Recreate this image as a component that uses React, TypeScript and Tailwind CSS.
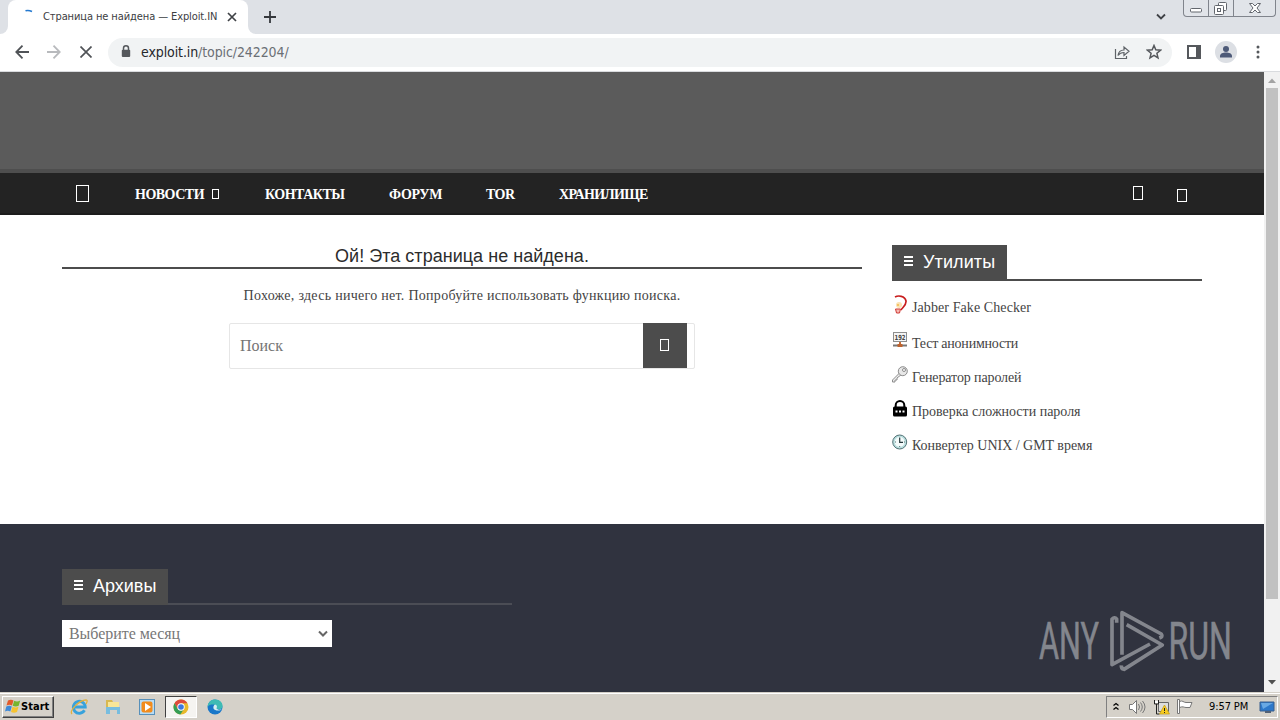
import type { ReactNode } from "react";

interface NavItem {
  label: string;
  className: string;
  textWidth: string;
  dropdown?: boolean;
}

interface Utility {
  label: string;
  icon: ReactNode;
  className: string;
}

const navItems: NavItem[] = [
  { label: "НОВОСТИ", className: "ml-[46px] w-[84px]", textWidth: "tracking-[-0.5px]", dropdown: true },
  { label: "КОНТАКТЫ", className: "ml-[46px] w-[79px]", textWidth: "tracking-[-0.5px]" },
  { label: "ФОРУМ", className: "ml-[45px] w-[53px]", textWidth: "tracking-[-0.32px]" },
  { label: "TOR", className: "ml-[44px] w-[29px]", textWidth: "tracking-[-0.5px]" },
  { label: "ХРАНИЛИЩЕ", className: "ml-[44px] w-[90px]", textWidth: "tracking-[-0.68px]" },
];

function JabberIcon() {
  return (
    <svg width="16" height="20" viewBox="0 0 16 20" fill="none">
      <path d="M3 2C6 .3 13 .5 14 6c.5 4-3 6-5 9" stroke="#c81e1e" strokeWidth="1.700" />
      <circle cx="7" cy="10" r="3" fill="#fbe3b4" />
      <circle cx="6" cy="10" r="1" fill="#f2b84b" />
      <path d="M3.500 14h5l-1 4h-3z" fill="#f6b8b2" stroke="#cf3a35" />
    </svg>
  );
}

function IpIcon() {
  return (
    <svg width="16" height="16" viewBox="0 0 16 16">
      <rect x="1.500" y=".5" width="13" height="9" fill="#f5f5f5" stroke="#8e8e8e" />
      <text x="2.500" y="7.500" fontSize="7" fontWeight="bold" fontFamily="DejaVu Sans" textLength="11" lengthAdjust="spacingAndGlyphs" fill="#444">192</text>
      <path d="M7 10h2v3H7z" fill="#c66a35" />
      <path d="M1 13.500h14" stroke="#777" strokeWidth="2" />
      <path d="M5.500 13.500h5" stroke="#bd632e" strokeWidth="3" />
    </svg>
  );
}

function KeyIcon() {
  return (
    <svg width="16" height="17" viewBox="0 0 16 17" fill="none">
      <path d="M7.500 7 .5 14v2h2.500v-2h2v-2l4.500-3.500" fill="#eee" stroke="#8c8c8c" />
      <circle cx="10.800" cy="5.200" r="4.500" fill="#e7e7e7" stroke="#8c8c8c" />
      <circle cx="12" cy="4" r="1.500" fill="#fff" stroke="#8c8c8c" />
    </svg>
  );
}

function PadlockIcon() {
  return (
    <svg width="16" height="17" viewBox="0 0 16 17" fill="none">
      <path d="M3.700 8V5.300a4.300 4.300 0 0 1 8.600 0V8" stroke="#000" strokeWidth="2" />
      <rect x="1" y="6.500" width="14" height="10" rx="1.500" fill="#000" />
      <path d="M3.500 10.500h2v2h-2zM7 10.500h2v2H7zM10.500 10.500h2v2h-2z" fill="#fff" />
    </svg>
  );
}

function ClockIcon() {
  return (
    <svg width="16" height="16" viewBox="0 0 16 16" fill="none">
      <circle cx="7.700" cy="8" r="7" fill="#b9dede" stroke="#547276" />
      <circle cx="7.700" cy="8" r="5" fill="#f4fbfb" />
      <path d="M7.700 3.500V8.300H11" stroke="#26383b" strokeWidth="1.200" />
      <path d="M7.700 12v1M3 8h1M12 8h1" stroke="#547276" />
    </svg>
  );
}

const utilities: Utility[] = [
  { label: "Jabber Fake Checker", icon: <JabberIcon />, className: "tracking-[0.09px]" },
  { label: "Тест анонимности", icon: <IpIcon />, className: "tracking-[-0.22px]" },
  { label: "Генератор паролей", icon: <KeyIcon />, className: "tracking-[-0.12px]" },
  { label: "Проверка сложности пароля", icon: <PadlockIcon />, className: "tracking-[-0.01px]" },
  { label: "Конвертер UNIX / GMT время", icon: <ClockIcon />, className: "tracking-[-0.02px]" },
];

function TabStrip() {
  return (
    <div className="flex h-[34px] bg-[#dee1e6]">
      <div className="w-2 bg-white">
        <div className="h-full rounded-br-lg bg-[#dee1e6]" />
      </div>
      <div className="flex w-60 items-center rounded-t-lg bg-white">
        <svg className="ml-3 shrink-0" width="16" height="16" viewBox="0 0 16 16" fill="none">
          <path d="M5.500 1.800Q8.500.8 12 2.500" stroke="#2479d0" strokeWidth="1.600" />
        </svg>
        <span className="ml-[7px] w-[176px] text-[11px] tracking-[-0.1px] whitespace-nowrap text-[#3c4043]">
          Страница не найдена — Exploit.IN
        </span>
        <svg className="ml-2" width="10" height="10" viewBox="0 0 10 10">
          <path d="m1 1 8 8M9 1 1 9" stroke="#3f4246" strokeWidth="1.700" />
        </svg>
      </div>
      <div className="w-2 bg-white">
        <div className="h-full rounded-bl-lg bg-[#dee1e6]" />
      </div>
      <svg className="mt-[11px] ml-[8px]" width="12" height="12" viewBox="0 0 12 12">
        <path d="M6 0v12M0 6h12" stroke="#35383c" strokeWidth="1.800" />
      </svg>
      <div className="flex-1" />
      <svg className="mt-[13px]" width="10" height="8" viewBox="0 0 10 8" fill="none">
        <path d="m1 1.500 4 4 4-4" stroke="#3f4246" strokeWidth="1.800" />
      </svg>
      <div className="ml-[17px] flex h-[17px] w-[93px] rounded-b-[4px] border border-t-0 border-[#80848c] bg-[#e1e4e9]">
        <svg width="91" height="16" viewBox="0 0 91 16" fill="none" stroke="#62666d">
          <path d="M24.500 0v16M49.500 0v16" stroke="#80848c" />
          <rect x="6.500" y="8.500" width="11" height="3.500" rx="1" fill="#fff" />
          <rect x="34.500" y="2.500" width="8" height="8" rx="1" fill="#fff" />
          <rect x="30.500" y="5.500" width="9" height="9" rx="1" fill="#fff" />
          <rect x="33.500" y="8.500" width="3" height="3" />
          <path d="M65.500 3.500h3l2.500 2.500 2.500-2.500h3L73 8l3.500 4.500h-3L71 10l-2.500 2.500h-3L69 8z" fill="#fff" />
        </svg>
      </div>
      <div className="w-[4px]" />
    </div>
  );
}

function Toolbar() {
  return (
    <div className="flex h-[38px] items-center border-b border-[#d9dbde] bg-white pb-px">
      <svg className="ml-[15px]" width="14" height="14" viewBox="0 0 14 14" fill="none" stroke="#505357" strokeWidth="1.800">
        <path d="M14 7H1.500M7.500.7 1.300 7l6.200 6.300" />
      </svg>
      <svg className="ml-[18px]" width="14" height="14" viewBox="0 0 14 14" fill="none" stroke="#b8babd" strokeWidth="1.800">
        <path d="M0 7h12.500M6.500.7 12.700 7l-6.200 6.300" />
      </svg>
      <svg className="ml-[19px]" width="12" height="12" viewBox="0 0 12 12" stroke="#505357" strokeWidth="1.700">
        <path d="m.5.5 11 11M11.500.5.5 11.500" />
      </svg>
      <div className="ml-4 flex h-[29px] w-[1064px] items-center rounded-full bg-[#f1f3f4]">
        <svg className="mb-px ml-[13px]" width="10" height="13" viewBox="0 0 10 13" fill="none">
          <path d="M2.500 6V3.300a2.500 2.500 0 0 1 5 0V6" stroke="#55585c" strokeWidth="1.500" />
          <rect x=".8" y="4.800" width="8.400" height="7.200" rx="1" fill="#55585c" />
        </svg>
        <span className="mt-px ml-[10px] text-[14px] tracking-[-0.1px] whitespace-nowrap text-[#6b6f74]">
          <span className="text-[#25272b]">exploit.in</span>/topic/242204/
        </span>
        <div className="flex-1" />
        <svg width="16" height="15" viewBox="0 0 16 15" fill="none" stroke="#5f6368" strokeWidth="1.200">
          <path d="M1.500 4v9.500h11V11" />
          <path d="M4 10.500C4.500 6.500 7 5 10 5V2l5 4.300-5 4.200v-3c-3 0-4.500.8-6 3z" />
        </svg>
        <svg className="mr-[10px] ml-4" width="16" height="16" viewBox="0 0 16 16" fill="none" stroke="#55585c" strokeWidth="1.500">
          <path d="m8 1.500 1.800 4.300 4.700.4-3.600 3.100 1.100 4.600L8 11.400l-4 2.500 1.100-4.600-3.600-3.100 4.700-.4z" />
        </svg>
      </div>
      <svg className="ml-[15px]" width="14" height="14" viewBox="0 0 14 14" fill="none">
        <rect x="1" y="1" width="12" height="12" stroke="#55585c" strokeWidth="2" />
        <path d="M9 0h5v14H9z" fill="#55585c" />
      </svg>
      <svg className="ml-[14px]" width="22" height="22" viewBox="0 0 22 22">
        <circle cx="11" cy="11" r="11" fill="#dcdfe4" />
        <circle cx="11" cy="8" r="3" fill="#4d5a78" />
        <path d="M5 16.500V15c0-2.500 3-3.500 6-3.500s6 1 6 3.500v1.500z" fill="#4d5a78" />
      </svg>
      <svg className="ml-[19px]" width="4" height="14" viewBox="0 0 4 14" fill="#55585c">
        <circle cx="2" cy="2" r="1.500" />
        <circle cx="2" cy="7" r="1.500" />
        <circle cx="2" cy="12" r="1.500" />
      </svg>
    </div>
  );
}

function MenuBars() {
  return (
    <svg className="mb-[2px]" width="10" height="12" viewBox="0 0 10 12" stroke="#fff" strokeWidth="2">
      <path d="M0 2h9M0 6h9M0 10h9" />
    </svg>
  );
}

function SiteNav() {
  return (
    <nav className="flex h-[42px] items-center border-b-2 border-[#1c1c1c] bg-[#232323] pl-[76px] font-['Liberation_Serif',serif] text-[14px] font-bold text-white">
      <div className="h-[17px] w-[13px] border border-white" />
      {navItems.map((item) => (
        <div key={item.label} className={`mt-[2px] flex shrink-0 items-center justify-between whitespace-nowrap ${item.className}`}>
          <span className={item.textWidth}>{item.label}</span>
          {item.dropdown && <span className="h-[10px] w-[7px] border border-white" />}
        </div>
      ))}
      <div className="ml-[484px] h-[14px] w-[10px] border border-white" />
      <div className="mt-[4px] ml-[34px] h-[13px] w-[10px] border border-white" />
    </nav>
  );
}

function AnyRunMark() {
  return (
    <svg className="absolute top-[604px] left-[1034px]" width="240" height="76" viewBox="0 0 240 76" fill="none" opacity=".9">
      <g fill="#8d8f96" stroke="#8d8f96" strokeWidth=".6" fontFamily="Roboto" fontSize="51">
        <text x="5" y="55" textLength="60" lengthAdjust="spacingAndGlyphs">ANY</text>
        <text x="134.500" y="55" textLength="63.500" lengthAdjust="spacingAndGlyphs">RUN</text>
      </g>
      <g transform="translate(66 0) scale(.33333)" stroke="#8d8f96" strokeWidth="11" strokeLinejoin="round">
        <path d="M50 56V45q-6-8-14 1v136l114-62" />
        <path d="M66 152V26l118 64q6 8-6 12" />
        <path d="m80 62 107 61L72 196q-9-2-8-12" />
      </g>
    </svg>
  );
}

function Scrollbar() {
  return (
    <div className="flex w-4 flex-col items-center bg-[#f1f1f1]">
      <svg className="mt-[6px]" width="8" height="5" viewBox="0 0 8 5">
        <path d="M0 5 4 .5 8 5z" fill="#a3a3a3" />
      </svg>
      <div className="mt-[5px] h-[511px] w-3 bg-[#c1c1c1]" />
      <div className="flex-1" />
      <svg className="mb-[7px]" width="8" height="5" viewBox="0 0 8 5">
        <path d="m0 0 4 4.500L8 0z" fill="#505050" />
      </svg>
    </div>
  );
}

function Page() {
  return (
    <div className="flex h-[620px]">
      <div className="flex flex-1 flex-col bg-white font-['Liberation_Serif',serif] text-[#444]">
        <header className="h-[101px] border-b-4 border-[#4e4e4e] bg-[#5b5b5b]" />
        <SiteNav />
        <main className="flex h-[309px] pt-[30px] pl-[62px]">
          <section className="flex w-[800px] flex-col items-center">
            <h1 className="h-6 w-full border-b-2 border-[#4c4c4c] text-center font-['Liberation_Sans',sans-serif] text-[18px] leading-[23px] font-normal tracking-[0.03px] whitespace-nowrap text-[#2c2c2c]">
              Ой! Эта страница не найдена.
            </h1>
            <p className="mt-[17px] text-[14px] leading-5 tracking-[0.28px] whitespace-nowrap">
              Похоже, здесь ничего нет. Попробуйте использовать функцию поиска.
            </p>
            <form className="mt-[17px] flex h-[46px] w-[466px] rounded-[2px] border border-[#e6e6e6] pr-[7px]">
              <span className="flex-1 pl-[10px] text-[16px] leading-[44px] text-[#757575]">Поиск</span>
              <button type="button" className="-mt-px flex h-[45px] w-11 items-center justify-center bg-[#4c4c4c]">
                <span className="mr-px mb-[2px] h-3 w-[9px] border border-white" />
              </button>
            </form>
          </section>
          <aside className="ml-[30px] w-[310px]">
            <div className="flex h-9 border-b-2 border-[#4c4c4c]">
              <h2 className="flex w-[115px] items-center gap-[9px] bg-[#4c4c4c] pl-3 font-['Liberation_Sans',sans-serif] text-[18px] tracking-[0.1px] text-white">
                <MenuBars />
                Утилиты
              </h2>
            </div>
            <ul className="mt-[10px] text-[14px] whitespace-nowrap">
              {utilities.map((item, i) => (
                <li key={item.label} className={i === 0 ? "flex h-[35px] pt-[4px]" : "flex h-[34px] pt-[5px]"}>
                  <span className={i === 0 ? "w-5 shrink-0" : "mt-px w-5 shrink-0"}>{item.icon}</span>
                  <span className={`leading-[26px] ${item.className}`}>{item.label}</span>
                </li>
              ))}
            </ul>
          </aside>
        </main>
        <footer className="flex-1 bg-[#30333f] pt-[45px] pl-[62px]">
          <div className="flex h-9 w-[450px] border-b-2 border-[#4b4d55]">
            <h2 className="flex h-9 w-[106px] items-center gap-[9px] bg-[#4c4c4c] pb-[2px] pl-3 font-['Liberation_Sans',sans-serif] text-[18px] text-white">
              <MenuBars />
              Архивы
            </h2>
          </div>
          <div className="mt-[15px] flex h-[27px] w-[270px] items-center justify-between bg-white pr-1 pl-[7px] text-[16px] tracking-[-0.05px] text-[#777]">
            Выберите месяц
            <svg width="10" height="8" viewBox="0 0 10 8" fill="none">
              <path d="m1 1.500 4 4 4-4" stroke="#666" strokeWidth="2" />
            </svg>
          </div>
        </footer>
      </div>
      <Scrollbar />
      <AnyRunMark />
    </div>
  );
}

function WindowsLogo() {
  return (
    <svg width="16" height="15" viewBox="0 0 16 15">
      <path d="M3 1.500q3-1.500 5.500 0L7 6.500q-2.500-1.300-5.500 0z" fill="#e35b2b" />
      <path d="M9.200 1.800q3 1.400 6-.2l-1.500 5.200q-3 1.200-6 0z" fill="#77b52f" />
      <path d="M1.300 7.400q3-1.500 5.500 0L5.300 12.500q-2.500-1.300-5.300 0z" fill="#3f8ad8" />
      <path d="M7.500 7.800q3 1.200 6 0L12 13q-3 1.300-6 0z" fill="#f6c330" />
    </svg>
  );
}

function Taskbar() {
  return (
    <div className="flex h-7 items-center border-t border-[#d4d0c8] bg-[#d5d1c9] shadow-[inset_0_1px_0_#fff]">
      <div className="ml-[2px] flex h-[22px] w-[52px] items-center border border-t-white border-r-[#404040] border-b-[#404040] border-l-white pl-[2px] shadow-[inset_-1px_-1px_0_#808080]">
        <WindowsLogo />
        <span className="mt-[2px] text-[11px] font-bold tracking-[0.05px] text-black">Start</span>
      </div>
      {/* Internet Explorer */}
      <svg className="ml-[16px]" width="18" height="18" viewBox="0 0 18 18" fill="none">
        <path d="M14.500 12.300a6 6 0 1 1 .8-3.300H5" stroke="#37a2dc" strokeWidth="2.800" />
        <path d="M2 16c-3-3 7-14 14-14 2 0 1 2 0 4" stroke="#e2b13d" strokeWidth="1.300" />
      </svg>
      {/* Explorer */}
      <svg className="ml-[17px]" width="16" height="16" viewBox="0 0 16 16">
        <path d="M1 1h6l1 2h5v12H1z" fill="#d8b851" />
        <path d="M3 3h11v7H3z" fill="#f8e697" />
        <path d="M1 8h14v7h-3v-4H5v4H1z" fill="#78bddf" />
        <path d="M5 11h7v4H5z" fill="#d5d1c9" />
      </svg>
      {/* Media player */}
      <svg className="ml-[18px]" width="16" height="16" viewBox="0 0 16 16">
        <rect x=".5" y=".5" width="15" height="15" fill="#b8dcf5" stroke="#5790ba" />
        <rect x="2.500" y="2.500" width="11" height="11" rx="2" fill="#f28c1d" />
        <path d="m6 4 6 4-6 4z" fill="#fff" />
      </svg>
      <div className="ml-[10px] flex h-[22px] w-8 items-center justify-center border border-t-[#404040] border-r-white border-b-white border-l-[#404040] bg-[#f5f4f1]">
        <svg width="16" height="16" viewBox="0 0 16 16">
          <circle cx="8" cy="8" r="7.500" fill="#e8b92c" />
          <path d="M1.500 4.200A7.500 7.500 0 0 1 14.500 4.300H8L4.700 10z" fill="#dd4a3c" />
          <path d="M1.500 4.200A7.500 7.500 0 0 0 7.300 15.500L11 10 8 11.500 4.700 10z" fill="#349d55" />
          <circle cx="8" cy="8" r="3.700" fill="#fff" />
          <circle cx="8" cy="8" r="2.800" fill="#3c78df" />
        </svg>
      </div>
      {/* Edge */}
      <svg className="ml-[10px]" width="16" height="16" viewBox="0 0 16 16">
        <circle cx="8" cy="8" r="7.500" fill="#1977c9" />
        <path d="M.5 8C1 3 4 .5 8 .5c5 0 8 3.500 7.500 7-.4 3-4 3.500-6 2 1-1.500 0-4-3-4S1.500 6 .5 8z" fill="#3ebbb4" />
        <path d="M8 5.500c2 .5 2.500 2 1.500 4 1.500 1.500 4 1.500 5.500.8-2 1.700-7 2-8.500-.8C6 7.500 7 6 8 5.500z" fill="#d5eef0" />
      </svg>
      <div className="flex-1" />
      <div className="flex h-[22px] w-[172px] items-center border border-t-[#808080] border-r-white border-b-white border-l-[#808080]">
        <svg className="mb-px ml-[6px]" width="6" height="9" viewBox="0 0 6 9" fill="none" stroke="#000" strokeWidth="1.300">
          <path d="m.5 3.500 2.500-2 2.500 2M.5 7.500l2.500-2 2.500 2" />
        </svg>
        <svg className="ml-[10px]" width="17" height="16" viewBox="0 0 17 16" fill="none" stroke="#777">
          <path d="M.5 5.500h3l4-4v13l-4-4h-3z" fill="#fff" />
          <path d="M9.500 5q2 3 0 6M11.500 3.500q3.500 4.500 0 9M13.500 2q5 6 0 12" />
        </svg>
        <svg className="ml-[7px]" width="17" height="16" viewBox="0 0 17 16" fill="none">
          <path d="M5.500 3.500h10v9h-10z" fill="#ddd" stroke="#666" />
          <path d="M1.500 1v4h4V1M3.500 5v10h3" stroke="#222" />
          <path d="M2 2h3v2H2z" fill="#fff" />
          <path d="m11.500 6 5 9h-10z" fill="#f8cc20" stroke="#c39b15" strokeWidth=".7" />
          <path d="M11.500 9v3M11.500 13v1" stroke="#222" />
        </svg>
        <svg className="ml-[7px]" width="16" height="15" viewBox="0 0 16 15" fill="#fff" stroke="#777">
          <path d="M.5.5h2v14h-2zM2.500 2.500c3-1.500 4 1 6.500 1h6l-2 5H9c-2 0-3-1.500-6.500 0z" />
        </svg>
        <span className="mt-[2px] ml-4 w-[42px] text-[11px] tracking-[-0.1px] whitespace-nowrap text-black">9:57 PM</span>
        <svg className="ml-[8px]" width="16" height="14" viewBox="0 0 16 14">
          <path d="M1 2h14v9H1z" fill="#2d78ca" stroke="#385e8e" />
          <path d="M2 3h12L4 9z" fill="#69a9e4" />
          <path d="M6 12h6" stroke="#526176" strokeWidth="2" />
        </svg>
      </div>
      <div className="w-[2px]" />
    </div>
  );
}

export default function App() {
  return (
    <div className="relative h-[720px] w-[1280px] overflow-hidden bg-white font-['DejaVu_Sans_Condensed','Noto_Sans',sans-serif]">
      <TabStrip />
      <Toolbar />
      <Page />
      <Taskbar />
    </div>
  );
}
